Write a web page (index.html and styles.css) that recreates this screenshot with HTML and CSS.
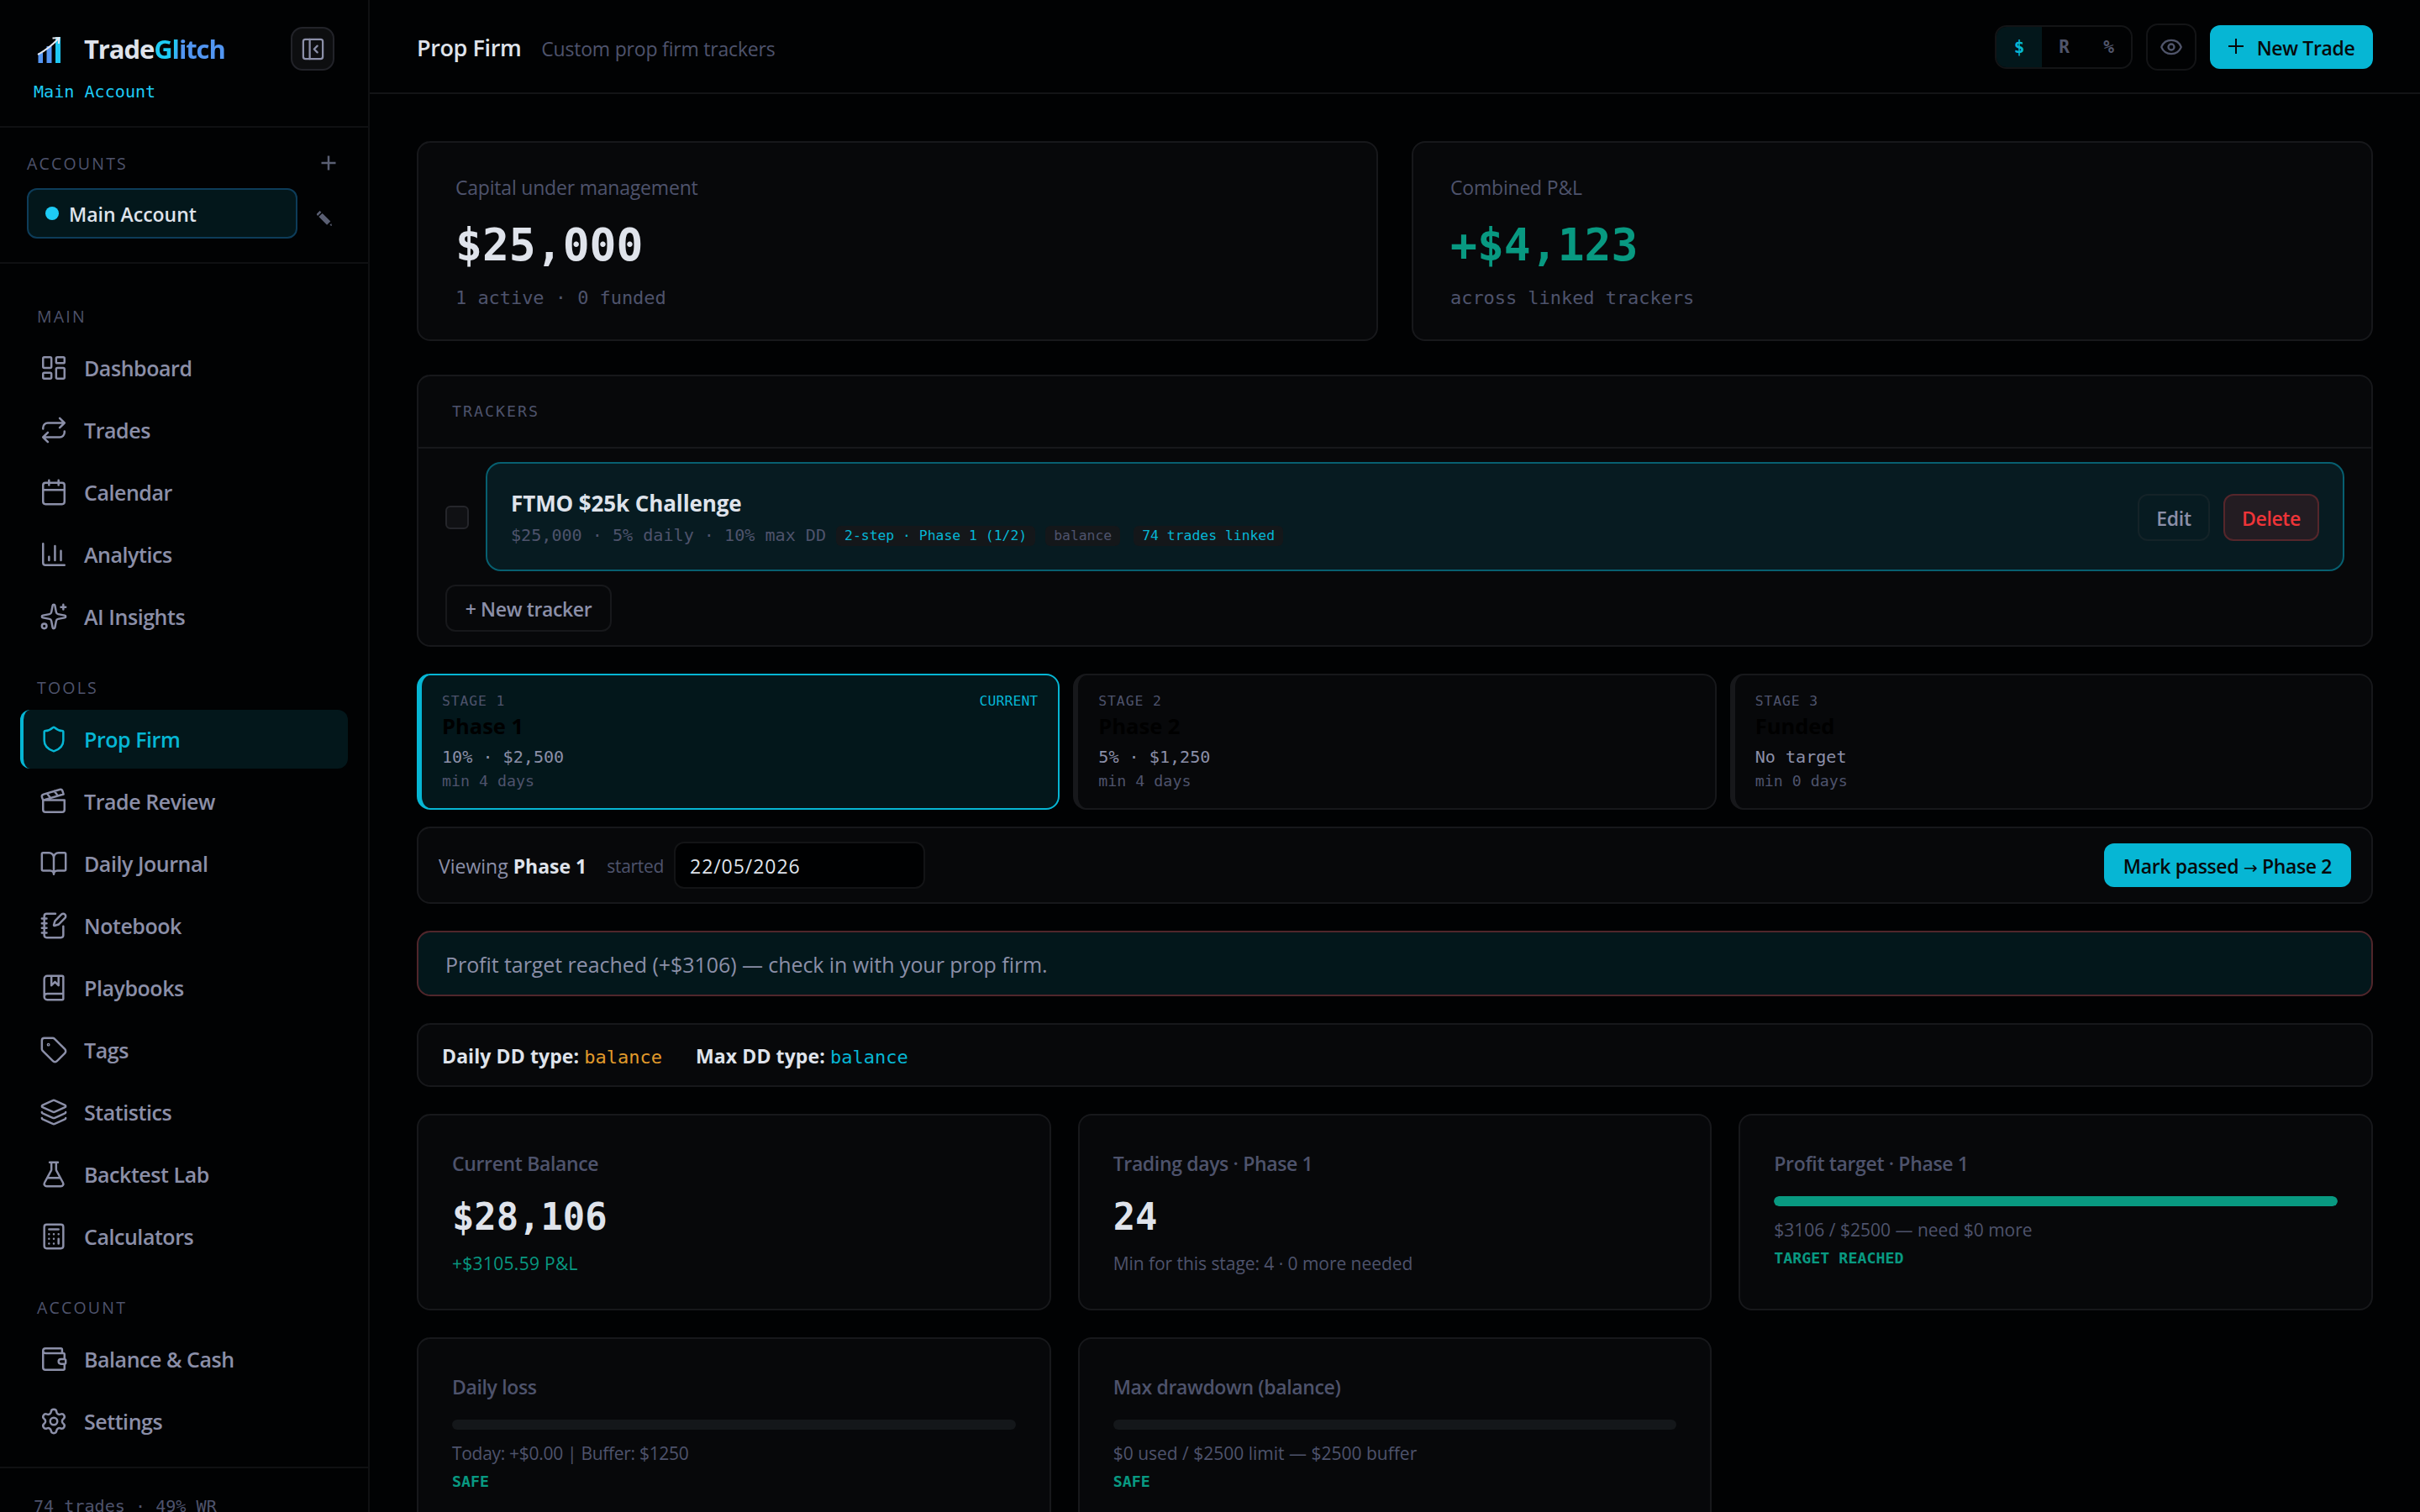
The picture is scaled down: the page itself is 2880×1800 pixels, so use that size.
FILE: index.html
```html
<!DOCTYPE html>
<html lang="en">
<head>
    <meta charset="UTF-8">
    <meta name="viewport" content="width=device-width, initial-scale=1.0">
    <title>TradeGlitch - Prop Firm</title>
    <link rel="stylesheet" href="styles.css">
</head>
<body>
    <div class="app">
        <aside class="sidebar">
            <div class="sidebar-header">
                <div class="brand">
                    <svg class="logo" viewBox="0 0 32 32">
                        <rect x="3.5" y="21" width="5.5" height="12" fill="#5596f3"/>
                        <rect x="13.5" y="13" width="6" height="20" fill="#5596f3"/>
                        <rect x="24" y="2" width="6" height="31" fill="#1fc8f4"/>
                        <path d="M3 23C12 18 20 12 27.5 4M20.5 3.5l8-.5-.7 7" fill="none" stroke="#e4e8f0" stroke-width="2"/>
                    </svg>
                    <span class="brand-name">Trade<span class="brand-accent">Glitch</span></span>
                    <button class="collapse-btn">
                        <svg class="icon" viewBox="0 0 24 24"><rect x="3" y="3" width="18" height="18" rx="2"/><path d="M9 3v18M16 15l-3-3 3-3"/></svg>
                    </button>
                </div>
                <div class="brand-account">Main Account</div>
            </div>

            <div class="accounts">
                <div class="accounts-head">
                    <span>ACCOUNTS</span>
                    <svg viewBox="0 0 18 18"><path d="M9 .5v17M.5 9h17"/></svg>
                </div>
                <div class="accounts-row">
                    <div class="account-pill"><span class="dot"></span>Main Account</div>
                    <svg class="pencil" viewBox="0 0 18 18"><path d="M1.500 2L3.300 3.800M4.500 5L14.200 14.700" fill="none" stroke="#5a5f73" stroke-width="6"/><path d="M15.300 17L17.300 15 18 18Z"/></svg>
                </div>
            </div>

            <nav class="nav">
                <div class="nav-group">
                    <div class="nav-label">MAIN</div>
                    <a class="nav-item"><svg class="icon" viewBox="0 0 24 24"><rect x="3" y="3" width="7" height="9" rx="1"/><rect x="14" y="3" width="7" height="5" rx="1"/><rect x="14" y="12" width="7" height="9" rx="1"/><rect x="3" y="16" width="7" height="5" rx="1"/></svg>Dashboard</a>
                    <a class="nav-item"><svg class="icon" viewBox="0 0 24 24"><path d="m17 2 4 4-4 4M3 11v-1a4 4 0 0 1 4-4h14M7 22l-4-4 4-4M21 13v1a4 4 0 0 1-4 4H3"/></svg>Trades</a>
                    <a class="nav-item"><svg class="icon" viewBox="0 0 24 24"><path d="M8 2v4M16 2v4M3 10h18"/><rect x="3" y="4" width="18" height="18" rx="2"/></svg>Calendar</a>
                    <a class="nav-item"><svg class="icon" viewBox="0 0 24 24"><path d="M3 3v16a2 2 0 0 0 2 2h16M18 17V9M13 17V5M8 17v-3"/></svg>Analytics</a>
                    <a class="nav-item"><svg class="icon" viewBox="0 0 24 24"><path d="M11.017 2.814a1 1 0 0 1 1.966 0l1.051 5.558a2 2 0 0 0 1.594 1.594l5.558 1.051a1 1 0 0 1 0 1.966l-5.558 1.051a2 2 0 0 0-1.594 1.594l-1.051 5.558a1 1 0 0 1-1.966 0l-1.051-5.558a2 2 0 0 0-1.594-1.594l-5.558-1.051a1 1 0 0 1 0-1.966l5.558-1.051a2 2 0 0 0 1.594-1.594zM20 2v4M22 4h-4"/><circle cx="4" cy="20" r="2"/></svg>AI Insights</a>
                </div>
                <div class="nav-group">
                    <div class="nav-label">TOOLS</div>
                    <a class="nav-item active"><svg class="icon" viewBox="0 0 24 24"><path d="M20 13c0 5-3.500 7.500-7.660 8.950a1 1 0 0 1-.67-.01C7.500 20.500 4 18 4 13V6a1 1 0 0 1 1-1c2 0 4.500-1.200 6.240-2.720a1.170 1.170 0 0 1 1.520 0C14.510 3.810 17 5 19 5a1 1 0 0 1 1 1z"/></svg>Prop Firm</a>
                    <a class="nav-item"><svg class="icon" viewBox="0 0 24 24"><path d="M20.200 6 3 11l-.9-2.400c-.3-1.100.3-2.200 1.300-2.500l13.500-4c1.100-.3 2.200.3 2.500 1.300ZM6.200 5.300l3.100 3.900M12.400 3.400l3.100 4M3 11h18v8a2 2 0 0 1-2 2H5a2 2 0 0 1-2-2Z"/></svg>Trade Review</a>
                    <a class="nav-item"><svg class="icon" viewBox="0 0 24 24"><path d="M12 7v14M3 18a1 1 0 0 1-1-1V4a1 1 0 0 1 1-1h5a4 4 0 0 1 4 4 4 4 0 0 1 4-4h5a1 1 0 0 1 1 1v13a1 1 0 0 1-1 1h-6a3 3 0 0 0-3 3 3 3 0 0 0-3-3z"/></svg>Daily Journal</a>
                    <a class="nav-item"><svg class="icon" viewBox="0 0 24 24"><path d="M13.400 2H6a2 2 0 0 0-2 2v16a2 2 0 0 0 2 2h12a2 2 0 0 0 2-2v-7.400M2 6h4M2 10h4M2 14h4M2 18h4M21.378 5.626a1 1 0 1 0-3.004-3.004l-5.010 5.012a2 2 0 0 0-.506.854l-.837 2.870a.5.5 0 0 0 .620.620l2.870-.837a2 2 0 0 0 .854-.506z"/></svg>Notebook</a>
                    <a class="nav-item"><svg class="icon" viewBox="0 0 24 24"><path d="M10 2v8l3-3 3 3V2M4 19.500v-15A2.500 2.500 0 0 1 6.500 2H19a1 1 0 0 1 1 1v18a1 1 0 0 1-1 1H6.500a1 1 0 0 1 0-5H20"/></svg>Playbooks</a>
                    <a class="nav-item"><svg class="icon" viewBox="0 0 24 24"><path d="M12.586 2.586A2 2 0 0 0 11.172 2H4a2 2 0 0 0-2 2v7.172a2 2 0 0 0 .586 1.414l8.704 8.704a2.426 2.426 0 0 0 3.420 0l6.580-6.580a2.426 2.426 0 0 0 0-3.420z"/><circle cx="7.500" cy="7.500" r=".5"/></svg>Tags</a>
                    <a class="nav-item"><svg class="icon" viewBox="0 0 24 24"><path d="M12.830 2.180a2 2 0 0 0-1.660 0L2.600 6.080a1 1 0 0 0 0 1.830l8.580 3.910a2 2 0 0 0 1.660 0l8.580-3.900a1 1 0 0 0 0-1.830zM2 12a1 1 0 0 0 .58.910l8.600 3.910a2 2 0 0 0 1.650 0l8.580-3.900A1 1 0 0 0 22 12M2 17a1 1 0 0 0 .58.910l8.600 3.910a2 2 0 0 0 1.650 0l8.580-3.900A1 1 0 0 0 22 17"/></svg>Statistics</a>
                    <a class="nav-item"><svg class="icon" viewBox="0 0 24 24"><path d="M14 2v6a2 2 0 0 0 .245.960l5.510 10.080A2 2 0 0 1 18 22H6a2 2 0 0 1-1.755-2.960l5.510-10.080A2 2 0 0 0 10 8V2M6.453 15h11.094M8.500 2h7"/></svg>Backtest Lab</a>
                    <a class="nav-item"><svg class="icon" viewBox="0 0 24 24"><rect x="4" y="2" width="16" height="20" rx="2"/><path d="M8 6h8M16 14v4M16 10h.01M12 10h.01M8 10h.01M12 14h.01M8 14h.01M12 18h.01M8 18h.01"/></svg>Calculators</a>
                </div>
                <div class="nav-group">
                    <div class="nav-label">ACCOUNT</div>
                    <a class="nav-item"><svg class="icon" viewBox="0 0 24 24"><path d="M19 7V4a1 1 0 0 0-1-1H5a2 2 0 0 0 0 4h15a1 1 0 0 1 1 1v4h-3a2 2 0 0 0 0 4h3a1 1 0 0 0 1-1v-2a1 1 0 0 0-1-1M3 5v14a2 2 0 0 0 2 2h15a1 1 0 0 0 1-1v-4"/></svg>Balance &amp; Cash</a>
                    <a class="nav-item"><svg class="icon" viewBox="0 0 24 24"><path d="M9.671 4.136a2.340 2.340 0 0 1 4.659 0 2.340 2.340 0 0 0 3.319 1.915 2.340 2.340 0 0 1 2.330 4.033 2.340 2.340 0 0 0 0 3.831 2.340 2.340 0 0 1-2.330 4.033 2.340 2.340 0 0 0-3.319 1.915 2.340 2.340 0 0 1-4.659 0 2.340 2.340 0 0 0-3.320-1.915 2.340 2.340 0 0 1-2.330-4.033 2.340 2.340 0 0 0 0-3.831A2.340 2.340 0 0 1 6.350 6.051a2.340 2.340 0 0 0 3.319-1.915"/><circle cx="12" cy="12" r="3"/></svg>Settings</a>
                </div>
            </nav>

            <div class="sidebar-footer">74 trades · 49% WR</div>
        </aside>

        <main class="main">
            <header class="topbar">
                <div class="page-title">
                    <h1>Prop Firm</h1>
                    <span>Custom prop firm trackers</span>
                </div>
                <div class="topbar-actions">
                    <div class="unit-toggle">
                        <button class="on">$</button>
                        <button>R</button>
                        <button>%</button>
                    </div>
                    <button class="eye-btn">
                        <svg class="icon" viewBox="0 0 24 24"><path d="M2.062 12.348a1 1 0 0 1 0-.696 10.750 10.750 0 0 1 19.876 0 1 1 0 0 1 0 .696 10.750 10.750 0 0 1-19.876 0"/><circle cx="12" cy="12" r="3"/></svg>
                    </button>
                    <button class="btn-primary new-trade">
                        <svg viewBox="0 0 18 18"><path d="M9 0v18M0 9h18"/></svg>New Trade
                    </button>
                </div>
            </header>

            <div class="content">
                <section class="summary">
                    <div class="card summary-card">
                        <div class="summary-label">Capital under management</div>
                        <div class="summary-value">$25,000</div>
                        <div class="summary-sub">1 active · 0 funded</div>
                    </div>
                    <div class="card summary-card">
                        <div class="summary-label">Combined P&amp;L</div>
                        <div class="summary-value green">+$4,123</div>
                        <div class="summary-sub">across linked trackers</div>
                    </div>
                </section>

                <section class="card trackers">
                    <div class="trackers-head">TRACKERS</div>
                    <div class="trackers-body">
                        <div class="tracker-row">
                            <span class="checkbox"></span>
                            <div class="tracker">
                                <div class="tracker-info">
                                    <div class="tracker-name">FTMO $25k Challenge</div>
                                    <div class="tracker-meta">
                                        <span>$25,000 · 5% daily · 10% max DD</span>
                                        <span class="badge cyan">2-step · Phase 1 (1/2)</span>
                                        <span class="badge">balance</span>
                                        <span class="badge cyan linked">74 trades linked</span>
                                    </div>
                                </div>
                                <button class="btn edit">Edit</button>
                                <button class="btn delete">Delete</button>
                            </div>
                        </div>
                        <button class="btn new-tracker">+ New tracker</button>
                    </div>
                </section>

                <section class="stages">
                    <div class="card stage current">
                        <div class="stage-top"><span>STAGE 1</span><span class="stage-flag">CURRENT</span></div>
                        <div class="stage-name">Phase 1</div>
                        <div class="stage-target">10% · $2,500</div>
                        <div class="stage-min">min 4 days</div>
                    </div>
                    <div class="card stage">
                        <div class="stage-top"><span>STAGE 2</span></div>
                        <div class="stage-name">Phase 2</div>
                        <div class="stage-target">5% · $1,250</div>
                        <div class="stage-min">min 4 days</div>
                    </div>
                    <div class="card stage">
                        <div class="stage-top"><span>STAGE 3</span></div>
                        <div class="stage-name">Funded</div>
                        <div class="stage-target">No target</div>
                        <div class="stage-min">min 0 days</div>
                    </div>
                </section>

                <section class="card viewing">
                    <span class="viewing-text">Viewing <b>Phase 1</b></span>
                    <span class="started">started</span>
                    <div class="date-input">22/05/2026</div>
                    <button class="btn-primary mark-passed"><span>Mark passed <span class="arrow">→</span> Phase 2</span></button>
                </section>

                <section class="alert">Profit target reached (+$3106) — check in with your prop firm.</section>

                <section class="card dd-types">
                    <div><b>Daily DD type:</b> <span class="amber">balance</span></div>
                    <div><b>Max DD type:</b> <span class="cyan">balance</span></div>
                </section>

                <section class="metrics">
                    <div class="card metric">
                        <div class="metric-label">Current Balance</div>
                        <div class="metric-value">$28,106</div>
                        <div class="metric-sub green">+$3105.59 P&amp;L</div>
                    </div>
                    <div class="card metric">
                        <div class="metric-label">Trading days · Phase 1</div>
                        <div class="metric-value">24</div>
                        <div class="metric-sub">Min for this stage: 4 · 0 more needed</div>
                    </div>
                    <div class="card metric">
                        <div class="metric-label">Profit target · Phase 1</div>
                        <div class="bar"><div class="bar-fill" style="width: 100%"></div></div>
                        <div class="bar-text">$3106 / $2500 — need $0 more</div>
                        <div class="status">TARGET REACHED</div>
                    </div>
                    <div class="card metric">
                        <div class="metric-label">Daily loss</div>
                        <div class="bar"><div class="bar-fill" style="width: 0%"></div></div>
                        <div class="bar-text today">Today: +$0.00 | Buffer: $1250</div>
                        <div class="status">SAFE</div>
                    </div>
                    <div class="card metric">
                        <div class="metric-label">Max drawdown (balance)</div>
                        <div class="bar"><div class="bar-fill" style="width: 0%"></div></div>
                        <div class="bar-text">$0 used / $2500 limit — $2500 buffer</div>
                        <div class="status">SAFE</div>
                    </div>
                </section>
            </div>
        </main>
    </div>
</body>
</html>
```

FILE: styles.css
```css
:root {
    --bg: #010203;
    --card: #07080a;
    --border: #17181b;
    --text: #dfe3eb;
    --text-2: #8b8fa8;
    --muted: #4e536c;
    --cyan: #06b6d4;
    --cyan-dim: #03171b;
    --green: #089981;
    --amber: #e09a2b;
    --sans: "Open Sans", "Noto Sans", sans-serif;
    --mono: "DejaVu Sans Mono", "Liberation Mono", monospace;
}
* {
    box-sizing: border-box;
    margin: 0;
    padding: 0;
}
body {
    background: var(--bg);
    color: var(--text);
    font-family: var(--sans);
    font-size: 23px;
    letter-spacing: -0.2px;
    height: 1800px;
    overflow: hidden;
}
button {
    font: inherit;
    letter-spacing: inherit;
    background: none;
    border: none;
    color: inherit;
}
.app {
    display: flex;
    height: 1800px;
    overflow: hidden;
}
.icon {
    width: 34px;
    height: 34px;
    flex: none;
    fill: none;
    stroke: currentColor;
    stroke-width: 1.75;
    stroke-linecap: round;
    stroke-linejoin: round;
}
.green { color: var(--green); }
.cyan { color: var(--cyan); }
.amber { color: var(--amber); }

/* Sidebar */
.sidebar {
    width: 440px;
    flex: none;
    display: flex;
    flex-direction: column;
    border-right: 2px solid #0f1012;
}
.sidebar-header {
    flex: none;
    height: 152px;
    padding: 32px 40px 0;
    border-bottom: 2px solid #0f1012;
}
.brand {
    display: flex;
    align-items: center;
    height: 52px;
}
.logo {
    width: 32px;
    height: 32px;
    margin: 0 26px 0 2px;
    overflow: visible;
}
.brand-name {
    font-size: 31px;
    font-weight: 700;
    letter-spacing: -1.1px;
    flex: 1;
}
.brand-accent {
    background: linear-gradient(100deg, #1ecbf5 30%, #5296f2 38%);
    -webkit-background-clip: text;
    background-clip: text;
    color: transparent;
}
.collapse-btn {
    width: 52px;
    height: 52px;
    display: flex;
    align-items: center;
    justify-content: center;
    background: #0d0e10;
    border: 2px solid #222329;
    border-radius: 14px;
    color: var(--text-2);
}
.collapse-btn .icon {
    width: 31px;
    height: 31px;
}
.brand-account {
    margin-top: 10px;
    font: 20.1px/30px var(--mono);
    letter-spacing: 0;
    color: #1ecbf5;
}
.accounts {
    flex: none;
    height: 162px;
    padding: 29px 38px 0 32px;
    border-bottom: 2px solid #0f1012;
}
.accounts-head {
    display: flex;
    justify-content: space-between;
    align-items: center;
    height: 26px;
    font-size: 19.5px;
    letter-spacing: 2.2px;
    color: var(--muted);
}
.accounts-head svg {
    width: 18px;
    height: 18px;
    fill: none;
    stroke: #5a5f73;
    stroke-width: 2.5;
}
.accounts-row {
    display: flex;
    align-items: center;
    justify-content: space-between;
    margin-top: 17px;
    padding-right: 5px;
}
.account-pill {
    width: 322px;
    height: 60px;
    display: flex;
    align-items: center;
    gap: 12px;
    padding: 1px 20px 0;
    background: var(--cyan-dim);
    border: 2px solid #0d3c59;
    border-radius: 12px;
    font-weight: 600;
    letter-spacing: 0;
}
.dot {
    width: 16px;
    height: 16px;
    margin-top: -1px;
    border-radius: 50%;
    background: #1ecbf5;
}
.pencil {
    width: 18px;
    height: 18px;
    margin-top: 12px;
    fill: #5a5f73;
}
.nav {
    flex: 1;
    min-height: 0;
    padding: 50px 24px 0;
}
.nav-group {
    margin-bottom: 37px;
}
.nav-group:last-child {
    margin-bottom: 0;
}
.nav-label {
    padding-left: 20px;
    margin-bottom: 13px;
    font-size: 19.5px;
    line-height: 26px;
    letter-spacing: 2.2px;
    color: var(--muted);
}
.nav-item {
    display: flex;
    align-items: center;
    gap: 19px;
    height: 70px;
    margin-bottom: 4px;
    padding-left: 19px;
    border-left: 4px solid transparent;
    border-radius: 12px;
    font-size: 25px;
    font-weight: 600;
    letter-spacing: -0.45px;
    color: var(--text-2);
}
.nav-item:last-child {
    margin-bottom: 0;
}
.nav-item.active {
    background: var(--cyan-dim);
    border-left-color: var(--cyan);
    color: var(--cyan);
}
.sidebar-footer {
    flex: none;
    height: 54px;
    padding: 30px 40px 0;
    border-top: 2px solid #0f1012;
    font: 20.1px/30px var(--mono);
    letter-spacing: 0;
    color: var(--muted);
    white-space: nowrap;
}

/* Top bar */
.main {
    flex: 1;
    min-width: 0;
}
.topbar {
    display: flex;
    align-items: center;
    justify-content: space-between;
    height: 112px;
    padding: 2px 56px 0;
    border-bottom: 2px solid #131416;
}
.page-title {
    display: flex;
    align-items: baseline;
    gap: 24px;
    color: var(--muted);
}
.page-title h1 {
    font-size: 27px;
    font-weight: 600;
    letter-spacing: -0.4px;
    color: var(--text);
}
.topbar-actions {
    display: flex;
    align-items: center;
    gap: 16px;
}
.unit-toggle {
    display: flex;
    height: 52px;
    border: 2px solid #131416;
    border-radius: 14px;
    overflow: hidden;
}
.unit-toggle button {
    width: 53px;
    font: bold 21px var(--mono);
    color: #50556b;
}
.unit-toggle button.on {
    width: 54px;
    background: var(--cyan-dim);
    color: var(--cyan);
}
.eye-btn {
    width: 60px;
    height: 56px;
    display: flex;
    align-items: center;
    justify-content: center;
    border: 2px solid #131416;
    border-radius: 14px;
    color: #50556b;
}
.eye-btn .icon {
    width: 28px;
    height: 28px;
    stroke-width: 2;
}
.btn-primary {
    display: flex;
    align-items: center;
    justify-content: center;
    height: 52px;
    padding-top: 2px;
    border-radius: 12px;
    background: var(--cyan);
    color: #06090b;
    font-weight: 600;
    letter-spacing: -0.35px;
}
.new-trade {
    width: 194px;
    gap: 16px;
}
.new-trade svg {
    width: 18px;
    height: 18px;
    margin-top: -4px;
    stroke: #06090b;
    stroke-width: 2;
}
.arrow {
    font: 20px "DejaVu Sans", sans-serif;
}

/* Content */
.content {
    padding: 56px 56px 0;
}
.card {
    background: var(--card);
    border: 2px solid var(--border);
    border-radius: 16px;
}
.summary {
    display: grid;
    grid-template-columns: 1fr 1fr;
    gap: 40px;
}
.summary-card {
    height: 238px;
    padding: 36px 44px;
}
.summary-label {
    line-height: 34px;
    color: var(--muted);
}
.summary-value {
    margin-top: 12px;
    font: bold 53px/80px var(--mono);
    letter-spacing: 0;
}
.summary-sub {
    margin-top: 8px;
    font: 22px/30px var(--mono);
    letter-spacing: -0.05px;
    color: var(--muted);
}
.trackers {
    margin-top: 40px;
}
.trackers-head {
    height: 86px;
    padding: 29px 40px;
    border-bottom: 2px solid var(--border);
    font: 18.3px/26px var(--mono);
    letter-spacing: 2px;
    color: var(--muted);
}
.trackers-body {
    padding: 16px 32px;
}
.tracker-row {
    display: flex;
    align-items: center;
    gap: 20px;
}
.checkbox {
    width: 28px;
    height: 28px;
    margin-top: 2px;
    border: 2px solid #25262b;
    border-radius: 6px;
    background: #101114;
}
.tracker {
    flex: 1;
    display: flex;
    align-items: center;
    height: 130px;
    padding: 2px 28px 0;
    border: 2px solid #075f70;
    border-radius: 18px;
    background: #071b21;
}
.tracker-info {
    flex: 1;
}
.tracker-name {
    font-size: 26px;
    font-weight: 700;
    line-height: 36px;
    letter-spacing: -0.1px;
}
.tracker-meta {
    display: flex;
    align-items: center;
    margin-top: 5px;
    font: 20.1px/30px var(--mono);
    letter-spacing: 0;
    color: var(--muted);
}
.badge {
    height: 24px;
    margin: 2px 0 0 12px;
    padding: 0 10px;
    border-radius: 6px;
    background: #14171a;
    font-size: 16.4px;
    line-height: 24px;
}
.badge.linked {
    margin-left: 16px;
}
.btn {
    height: 56px;
    padding-top: 2px;
    border: 2px solid var(--border);
    border-radius: 12px;
    font-weight: 600;
    letter-spacing: -0.35px;
    color: var(--text-2);
}
.edit {
    width: 86px;
    border-color: #142328;
}
.delete {
    width: 114px;
    margin-left: 16px;
    border-color: #55262b;
    background: #231c22;
    color: #ef3438;
}
.new-tracker {
    width: 198px;
    margin-top: 16px;
    display: block;
}
.stages {
    display: grid;
    grid-template-columns: repeat(3, 1fr);
    gap: 16px;
    margin-top: 32px;
}
.stage {
    height: 162px;
    padding: 19px 24px 0;
    border-left-width: 6px;
}
.stage.current {
    background: var(--cyan-dim);
    border-color: var(--cyan);
}
.stage-top {
    display: flex;
    justify-content: space-between;
    font: 16.4px/24px var(--mono);
    letter-spacing: 0.9px;
    color: var(--muted);
}
.stage-flag {
    letter-spacing: 0.1px;
    color: var(--cyan);
}
.stage-name {
    margin-top: 2px;
    font-size: 25.5px;
    font-weight: 700;
    line-height: 30px;
    letter-spacing: 0;
    color: #000;
}
.stage-target {
    margin-top: 8px;
    font: 20.1px/28px var(--mono);
    letter-spacing: 0;
    color: var(--text-2);
}
.stage-min {
    margin-top: 1px;
    font: 18.3px/28px var(--mono);
    letter-spacing: 0;
    color: var(--muted);
}
.viewing {
    display: flex;
    align-items: center;
    height: 92px;
    margin-top: 20px;
    padding: 0 24px;
}
.viewing-text {
    padding-top: 1px;
    letter-spacing: 0;
    color: var(--text-2);
}
.viewing b {
    color: var(--text);
}
.started {
    margin-left: 24px;
    padding-top: 2px;
    font-size: 21px;
    letter-spacing: -0.3px;
    color: var(--muted);
}
.date-input {
    width: 299px;
    height: 56px;
    margin-left: 12px;
    padding-left: 17px;
    border: 2px solid #131416;
    border-radius: 12px;
    background: #000102;
    line-height: 54px;
    letter-spacing: 0.95px;
}
.mark-passed {
    width: 294px;
    margin-left: auto;
}
.alert {
    height: 78px;
    margin-top: 32px;
    padding-left: 32px;
    border: 2px solid #50262b;
    border-radius: 16px;
    background: var(--cyan-dim);
    font-size: 25px;
    line-height: 76px;
    letter-spacing: -0.06px;
    color: var(--text-2);
}
.dd-types {
    display: flex;
    align-items: center;
    gap: 40px;
    height: 76px;
    margin-top: 32px;
    padding: 2px 28px 0;
    letter-spacing: 0.1px;
}
.dd-types span {
    font: 22px var(--mono);
    letter-spacing: 0;
}
.metrics {
    display: grid;
    grid-template-columns: repeat(3, 1fr);
    gap: 32px;
    margin-top: 32px;
}
.metric {
    height: 234px;
    padding: 40px 40px 0;
}
.metric-label {
    font-weight: 600;
    line-height: 34px;
    letter-spacing: -0.35px;
    color: var(--muted);
}
.metric-value {
    margin-top: 17px;
    font: bold 43.8px/60px var(--mono);
    letter-spacing: 0;
}
.metric-sub {
    margin-top: 9px;
    font-size: 21px;
    line-height: 32px;
    letter-spacing: -0.05px;
}
.metric-sub.green {
    letter-spacing: 0.3px;
}
.metric-sub:not(.green) {
    color: var(--muted);
}
.bar {
    height: 12px;
    margin-top: 22px;
    border-radius: 6px;
    background: #14171a;
    overflow: hidden;
}
.bar-fill {
    height: 100%;
    border-radius: 6px;
    background: var(--green);
}
.bar-text {
    margin-top: 12px;
    font-size: 21px;
    line-height: 32px;
    letter-spacing: 0;
    color: var(--muted);
}
.bar-text.today {
    letter-spacing: -0.3px;
}
.status {
    margin-top: 4px;
    font: bold 18.3px/28px var(--mono);
    letter-spacing: 0;
    color: var(--green);
}
```
